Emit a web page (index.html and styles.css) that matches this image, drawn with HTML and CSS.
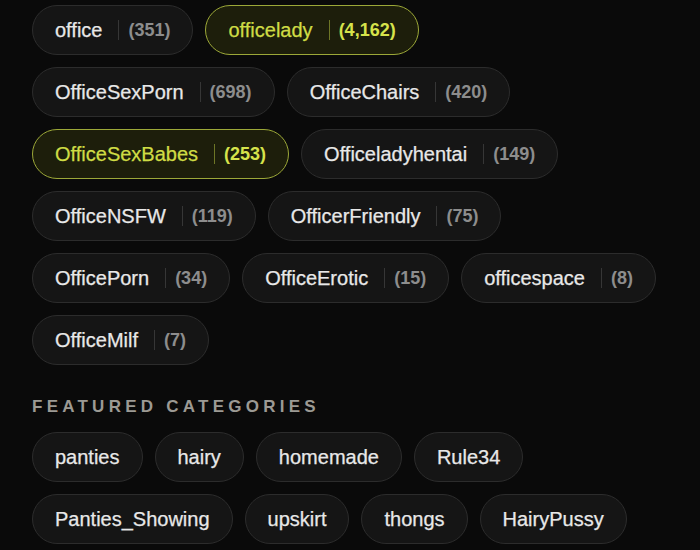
FILE: index.html
```html
<!DOCTYPE html>
<html lang="en">
<head>
<meta charset="utf-8">
<title>Tags</title>
<link rel="stylesheet" href="styles.css">
</head>
<body>
<main class="page">
  <div class="chips">
    <a class="chip"><span class="name">office</span><span class="count">(351)</span></a>
    <a class="chip active"><span class="name">officelady</span><span class="count">(4,162)</span></a>
    <a class="chip"><span class="name">OfficeSexPorn</span><span class="count">(698)</span></a>
    <a class="chip"><span class="name">OfficeChairs</span><span class="count">(420)</span></a>
    <a class="chip active"><span class="name">OfficeSexBabes</span><span class="count">(253)</span></a>
    <a class="chip"><span class="name">Officeladyhentai</span><span class="count">(149)</span></a>
    <a class="chip"><span class="name">OfficeNSFW</span><span class="count">(119)</span></a>
    <a class="chip"><span class="name">OfficerFriendly</span><span class="count">(75)</span></a>
    <a class="chip"><span class="name">OfficePorn</span><span class="count">(34)</span></a>
    <a class="chip"><span class="name">OfficeErotic</span><span class="count">(15)</span></a>
    <a class="chip"><span class="name">officespace</span><span class="count">(8)</span></a>
    <a class="chip"><span class="name">OfficeMilf</span><span class="count">(7)</span></a>
  </div>
  <h2 class="section-title">FEATURED CATEGORIES</h2>
  <div class="chips">
    <a class="chip"><span class="name">panties</span></a>
    <a class="chip"><span class="name">hairy</span></a>
    <a class="chip"><span class="name">homemade</span></a>
    <a class="chip"><span class="name">Rule34</span></a>
    <a class="chip"><span class="name">Panties_Showing</span></a>
    <a class="chip"><span class="name">upskirt</span></a>
    <a class="chip"><span class="name">thongs</span></a>
    <a class="chip"><span class="name">HairyPussy</span></a>
  </div>
</main>
</body>
</html>
```
FILE: styles.css
```css
html, body {
  margin: 0;
  padding: 0;
  background: #0a0a0a;
}

body {
  font-family: "Liberation Sans", Arial, sans-serif;
  color: #e6e6e6;
}

.page {
  padding: 5px 40px 0 32px;
}

.chips {
  display: flex;
  flex-wrap: wrap;
  gap: 12px;
}

.chip {
  display: inline-flex;
  align-items: center;
  height: 50px;
  box-sizing: border-box;
  padding: 0 22px 0 22px;
  border: 1px solid #2c2c2c;
  border-radius: 25px;
  background: #151515;
  color: #e8e8e8;
  text-decoration: none;
}

.name {
  font-size: 20px;
  line-height: 24px;
  -webkit-text-stroke: 0.25px currentColor;
}

.count {
  margin-left: 16px;
  padding-left: 9px;
  border-left: 1px solid #363636;
  font-size: 18px;
  line-height: 20px;
  font-weight: 700;
  color: #8d8d8d;
}

.chip.active {
  background: #1d1e0b;
  border-color: #9ca838;
  color: #cfdc45;
}

.chip.active .count {
  color: #d6e34b;
  border-left-color: #6e7626;
}

.section-title {
  margin: 32px 0 15px 0;
  font-size: 17px;
  font-weight: 700;
  letter-spacing: 0.25em;
  color: #9c9a94;
  line-height: 20px;
}
```
